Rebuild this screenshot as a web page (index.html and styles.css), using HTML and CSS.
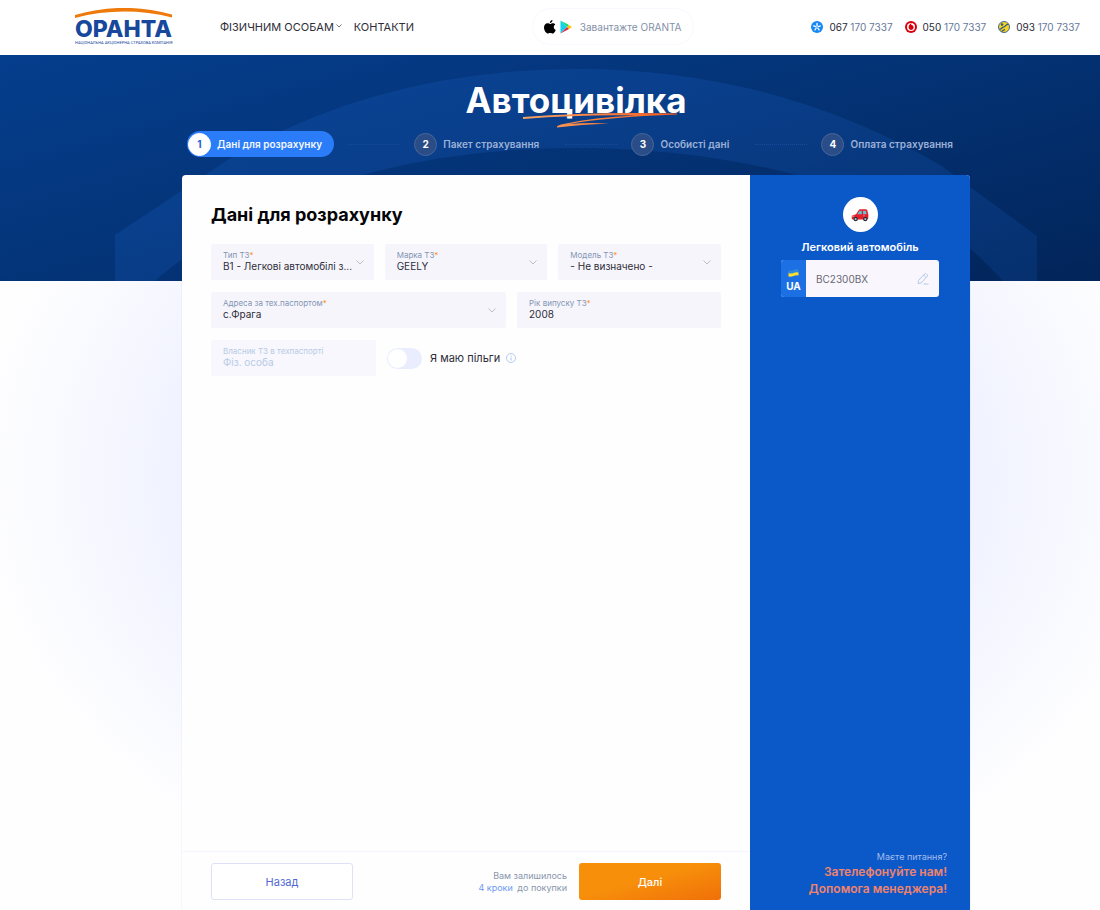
FILE: index.html
```html
<!DOCTYPE html>
<html lang="uk">
<head>
    <meta charset="UTF-8">
    <meta name="viewport" content="width=device-width, initial-scale=1">
    <title>Автоцивілка</title>
    <link rel="stylesheet" href="styles.css">
</head>
<body>
    <header class="header">
        <a class="logo" href="#">
            <svg class="logo-arc" viewBox="0 0 98 11" aria-hidden="true"><path d="M0 7Q48-7 97 6.500V9.500Q48-2.500 0 10Z" fill="#ee7a0b"/></svg>
            <span class="logo-name">ОРАНТА</span>
            <span class="logo-sub">НАЦІОНАЛЬНА АКЦІОНЕРНА СТРАХОВА КОМПАНІЯ</span>
        </a>
        <nav class="nav">
            <a href="#">ФІЗИЧНИМ ОСОБАМ
                <svg width="6" height="4" viewBox="0 0 6 4"><path d="M.5.500 3 3 5.500.500" fill="none" stroke="#555" stroke-width=".8"/></svg>
            </a>
            <a href="#">КОНТАКТИ</a>
        </nav>
        <a class="app-link" href="#">
            <svg width="12" height="14" viewBox="0 0 24 28"><path d="M17 0c.3 3-2.300 6.200-5.300 6C11.300 3.200 14 .400 17 0ZM12.300 7.800c1.200 0 2.700-1.500 5.200-1.500 2 0 4 1 5.200 2.800-4.500 2.700-3.800 8.900.800 10.900-1.200 3.300-3.500 7-6 7-2 0-2.600-1.200-5-1.200S9.200 27 7.400 27C4 27 0 20.500 0 15.200c0-5.500 3.300-8.700 6.800-8.700 2.500 0 4.300 1.300 5.500 1.300Z" fill="#000"/></svg>
            <svg width="12" height="14" viewBox="0 0 24 28"><path d="M1 1v26L14 14Z" fill="#12d0ef"/><path d="M1 1 18 10 14 14Z" fill="#10dc70"/><path d="M18 10l6 4-6 4-4-4Z" fill="#fdc500"/><path d="M1 27 18 18 14 14Z" fill="#e32a45"/></svg>
            <span>Завантажте ORANTA</span>
        </a>
        <div class="phones">
            <a href="tel:0671707337">
                <svg width="12" height="12" viewBox="0 0 24 24"><circle cx="12" cy="12" r="12" fill="#1589f4"/><path d="M12 9.500V5M14.400 11.200l4.300-1.400M13.500 14l2.600 3.700M10.500 14l-2.600 3.700M9.600 11.200 5.300 9.800" stroke="#fff" stroke-width="2.600" stroke-linecap="round"/></svg>
                <span><b>067</b> 170 7337</span>
            </a>
            <a href="tel:0501707337">
                <svg width="12" height="12" viewBox="0 0 24 24"><circle cx="12" cy="12" r="12" fill="#d9000d"/><circle cx="12" cy="12" r="8" fill="#fff"/><path d="M14.500 4c-2 .5-2.500 2-2.300 3.500 3 .7 5 2.500 5 5.200a5 5 0 0 1-10 .2C7 8.500 10.500 4.500 14.500 4Z" fill="#d9000d"/></svg>
                <span><b>050</b> 170 7337</span>
            </a>
            <a href="tel:0931707337">
                <svg width="12" height="12" viewBox="0 0 24 24"><circle cx="12" cy="12" r="11" fill="#f9d31c" stroke="#42699b" stroke-width="2"/><path d="M3 16c5 1 4-4 8-4s4-6 10-5M7 21c4-1 3-4 7-4" fill="none" stroke="#28598f" stroke-width="2.500"/><circle cx="8" cy="7" r="2.500" fill="#28598f"/></svg>
                <span><b>093</b> 170 7337</span>
            </a>
        </div>
    </header>

    <main class="main">
        <svg class="backdrop" viewBox="0 0 1100 226" preserveAspectRatio="none" aria-hidden="true">
            <defs>
                <linearGradient id="arch" x1="0" y1="0" x2="1" y2="1">
                    <stop offset="0" stop-color="#1557b5" stop-opacity=".35"/>
                    <stop offset="1" stop-color="#1557b5" stop-opacity=".2"/>
                </linearGradient>
            </defs>
            <path d="M115 226V180Q183 135 238 98Q390 14 576 14Q775 14 940 110L1037 181V226H1003Q970 190 940 170Q770 93 576 93Q390 93 260 160Q195 190 155 226Z" fill="url(#arch)"/>
        </svg>

        <div class="content">
            <h1 class="title">Автоцивілка
                <svg class="underline" width="154" height="16" viewBox="0 0 154 16" aria-hidden="true">
                    <defs>
                        <linearGradient id="stroke" x1="0" x2="1"><stop offset="0" stop-color="#f8a463"/><stop offset="1" stop-color="#f75b1c"/></linearGradient>
                    </defs>
                    <path d="M0 5Q74-.500 154 1.500V2.500Q84 5 46 12Q64 10.500 86 11.500Q58 12.500 34 15.500Q33 14 38 12.500Q72 5 112 3.500Q60 2.500 0 7Z" fill="url(#stroke)"/>
                </svg>
            </h1>

            <ol class="steps">
                <li class="step active"><span class="num">1</span>Дані для розрахунку</li>
                <li class="line"></li>
                <li class="step"><span class="num">2</span>Пакет страхування</li>
                <li class="line"></li>
                <li class="step"><span class="num">3</span>Особисті дані</li>
                <li class="line"></li>
                <li class="step"><span class="num">4</span>Оплата страхування</li>
            </ol>

            <div class="card">
                <form class="form">
                    <div class="form-body">
                        <h2>Дані для розрахунку</h2>
                        <div class="row thirds">
                            <div class="field">
                                <label for="type">Тип ТЗ<i>*</i></label>
                                <select id="type"><option>В1 - Легкові автомобілі з...</option></select>
                            </div>
                            <div class="field">
                                <label for="brand">Марка ТЗ<i>*</i></label>
                                <select id="brand"><option>GEELY</option></select>
                            </div>
                            <div class="field">
                                <label for="model">Модель ТЗ<i>*</i></label>
                                <select id="model"><option>- Не визначено -</option></select>
                            </div>
                        </div>
                        <div class="row address">
                            <div class="field">
                                <label for="address">Адреса за тех.паспортом<i>*</i></label>
                                <select id="address"><option>с.Фрага</option></select>
                            </div>
                            <div class="field">
                                <label for="year">Рік випуску ТЗ<i>*</i></label>
                                <input id="year" type="text" value="2008">
                            </div>
                        </div>
                        <div class="row owner">
                            <div class="field disabled">
                                <label for="owner">Власник ТЗ в техпаспорті</label>
                                <input id="owner" type="text" value="Фіз. особа" disabled>
                            </div>
                            <div class="benefits">
                                <input class="toggle" id="benefits" type="checkbox">
                                <label for="benefits">Я маю пільги</label>
                                <svg width="10" height="10" viewBox="0 0 20 20"><circle cx="10" cy="10" r="9" fill="none" stroke="#9fbde6" stroke-width="1.500"/><path d="M10 9v6M10 5v2" stroke="#9fbde6" stroke-width="1.800"/></svg>
                            </div>
                        </div>
                    </div>
                    <div class="form-footer">
                        <button class="btn back" type="button">Назад</button>
                        <p class="left-steps">Вам залишилось<br><a href="#">4 кроки</a> до покупки</p>
                        <button class="btn next" type="button">Далі</button>
                    </div>
                </form>

                <aside class="side">
                    <div class="car">
                        <svg width="18" height="14" viewBox="0 0 40 32" aria-hidden="true">
                            <path d="M1 20q0-3 4-4l6-2 6-9q1-2 4-2h12q3 0 4 3l2 8v9q0 3-3 3H4q-3 0-3-3Z" fill="#e51d2b"/>
                            <path d="M14 14l5-7q1-1 3-1h2v8ZM27 6h5q2 0 2 2l1 6h-8Z" fill="#62c5d6"/>
                            <path d="M2 20l6-2M27 18h4" stroke="#ffb1a6" stroke-width="1.500"/>
                            <circle cx="10" cy="25" r="5" fill="#26323a"/><circle cx="10" cy="25" r="2.300" fill="#b8c5ca"/>
                            <circle cx="32" cy="25" r="5" fill="#26323a"/><circle cx="32" cy="25" r="2.300" fill="#b8c5ca"/>
                        </svg>
                    </div>
                    <h3>Легковий автомобіль</h3>
                    <div class="plate">
                        <div class="country">
                            <svg width="11" height="8" viewBox="0 0 22 16" aria-hidden="true"><path d="M1 2q5 2 10 0t10-1v7q-5-1-10 1T1 9Z" fill="#3189dc"/><path d="M1 8q5 2 10 0t10-1v6q-5-1-10 1T1 15Z" fill="#fde02e"/></svg>
                            UA
                        </div>
                        <input type="text" value="BC2300BX" aria-label="Номерний знак">
                        <button type="button" aria-label="Редагувати">
                            <svg width="12" height="12" viewBox="0 0 24 24" fill="none" stroke="#a9c4e2" stroke-width="1.800" stroke-linejoin="round"><path d="M2 21l1-6L15 2q2-2 4 0l1 1q2 2 0 4L8 20ZM13 4l5 5M13 22h10"/></svg>
                        </button>
                    </div>
                    <div class="help">
                        <p>Маєте питання?</p>
                        <a href="#">Зателефонуйте нам!</a>
                        <a href="#">Допомога менеджера!</a>
                    </div>
                </aside>
            </div>
        </div>
    </main>
</body>
</html>
```

FILE: styles.css
```css
* {
    box-sizing: border-box;
}

body {
    margin: 0;
    min-height: 100vh;
    display: flex;
    flex-direction: column;
    font-family: Inter, "Open Sans", sans-serif;
    font-size: 11px;
    color: #2d2d38;
    background: #fefeff;
}

h1, h2, h3, p, ol {
    margin: 0;
    padding: 0;
}

a {
    color: inherit;
    text-decoration: none;
}

svg {
    flex: none;
}

button, input, select {
    font-family: inherit;
}

/* header */
.header {
    height: 55px;
    padding: 0 20px 2px 75px;
    display: flex;
    align-items: center;
    background: #fff;
}

.logo {
    width: 98px;
    display: flex;
    flex-direction: column;
    color: #17489c;
}

.logo-arc {
    width: 98px;
    height: 11px;
}

.logo-name {
    font-size: 23px;
    line-height: 20px;
    font-weight: 800;
}

.logo-sub {
    margin-top: 2px;
    font-family: Roboto, sans-serif;
    font-size: 4px;
    line-height: 4px;
    white-space: nowrap;
}

.nav {
    margin-left: 47px;
    display: flex;
    gap: 12px;
}

.nav a {
    display: flex;
    gap: 2px;
    white-space: nowrap;
}

.nav svg {
    margin-top: 4px;
}

.app-link {
    height: 37px;
    margin-left: auto;
    padding: 0 11px;
    display: flex;
    align-items: center;
    gap: 4px;
    border: 1px solid #f8f8fe;
    border-radius: 20px;
    font-size: 10px;
    color: #8390a9;
    white-space: nowrap;
}

.app-link span {
    margin-left: 4px;
}

.phones {
    margin-left: auto;
    display: flex;
    gap: 12px;
    font-size: 10px;
    color: #66799a;
    white-space: nowrap;
}

.phones a {
    display: flex;
    align-items: center;
    gap: 6px;
}

.phones b {
    font-weight: 400;
    color: #292936;
}

/* main area */
.main {
    position: relative;
    flex: 1;
    display: flex;
    padding-left: 52px;
    background:
        linear-gradient(165deg, #053e8d 0%, #04357a 40%, #02255a 100%) 0 0 / 100% 226px no-repeat,
        radial-gradient(ellipse 600px 450px at 576px 420px, #e9ecff 0%, #f0f2ff 66%, #f8f9ff 84%, #fefeff 100%);
}

.backdrop {
    position: absolute;
    top: 0;
    left: 0;
    width: 100%;
    height: 226px;
}

.content {
    position: relative;
    width: 100%;
    max-width: 788px;
    margin: 0 auto;
    display: flex;
    flex-direction: column;
}

.title {
    position: relative;
    align-self: center;
    margin-top: 24px;
    font-size: 35px;
    line-height: 42px;
    font-weight: 700;
    color: #fff;
}

.underline {
    position: absolute;
    right: 10px;
    bottom: -7px;
}

.steps {
    margin: 10px 5px 18px;
    display: flex;
    align-items: center;
    justify-content: space-between;
    list-style: none;
}

.step {
    height: 26px;
    padding: 0 12px 0 1px;
    display: flex;
    align-items: center;
    gap: 6px;
    border-radius: 13px;
    font-size: 10px;
    font-weight: 600;
    color: #9db1d8;
    white-space: nowrap;
}

.num {
    width: 23px;
    height: 23px;
    display: grid;
    place-items: center;
    border: 1px solid #496798;
    border-radius: 50%;
    background: #2b4d87;
    color: #fff;
    font-weight: 700;
}

.step.active {
    background: #2b7cf8;
    color: #f4f8ff;
}

.step.active .num {
    background: #fff;
    border-color: #fff;
    color: #2462cf;
}

.line {
    width: 52px;
    border-top: 1px dotted #174b99;
}

/* card */
.card {
    flex: 1;
    display: grid;
    grid-template-columns: 1fr 220px;
    border-radius: 4px 4px 0 0;
    overflow: hidden;
    background: #fefeff;
    box-shadow: 0 0 1px rgba(40, 50, 200, .35);
}

.form {
    display: flex;
    flex-direction: column;
}

.form-body {
    flex: 1;
    padding: 28px 29px;
    display: flex;
    flex-direction: column;
    gap: 12px;
}

.form h2 {
    margin-bottom: 5px;
    font-size: 18px;
    line-height: 24px;
    font-weight: 700;
    color: #050508;
}

.row {
    display: grid;
    gap: 11px;
}

.thirds {
    grid-template-columns: repeat(3, 1fr);
}

.address {
    grid-template-columns: 295fr 204fr;
}

.owner {
    grid-template-columns: 165px 1fr;
}

.field {
    height: 36px;
    padding: 7px 10px 5px 12px;
    border-radius: 2px;
    background: #f7f5fc;
}

.field label {
    display: block;
    font-size: 8px;
    line-height: 9px;
    color: #8295b3;
}

.field i {
    font-style: normal;
    color: #ff8f1f;
}

.field select,
.field input {
    display: block;
    width: 100%;
    height: 13px;
    padding: 0;
    border: 0;
    outline: 0;
    appearance: none;
    background: none;
    font-size: 10px;
    line-height: 13px;
    color: #2d2d38;
}

.field select {
    background: url("data:image/svg+xml,%3Csvg xmlns='http://www.w3.org/2000/svg' width='8' height='5'%3E%3Cpath d='M.5.500 4 4 7.500.500' fill='none' stroke='%23b9bfcc'/%3E%3C/svg%3E") right 0 top 0 no-repeat;
}

.field.disabled {
    background: #f7f7fd;
}

.field.disabled label,
.field.disabled input {
    color: #b9cbe6;
}

.benefits {
    display: flex;
    align-items: center;
    gap: 6px;
}

.toggle {
    appearance: none;
    width: 35px;
    height: 21px;
    margin: 0 2px 0 0;
    border-radius: 11px;
    background: #e9edfd;
}

.toggle::before {
    content: "";
    display: block;
    width: 19px;
    height: 19px;
    margin: 1px;
    border-radius: 50%;
    background: #fff;
}

.form-footer {
    padding: 11px 29px 10px;
    display: flex;
    align-items: center;
    border-top: 1px solid #f4f5fd;
}

.btn {
    width: 142px;
    height: 37px;
    border: 1px solid #dfe1f8;
    border-radius: 3px;
    font-size: 11px;
    cursor: pointer;
}

.back {
    background: #fff;
    color: #5267d2;
}

.next {
    border: 0;
    background: linear-gradient(165deg, #f78f0b 45%, #f07008 100%);
    color: #fff;
    font-weight: 500;
}

.left-steps {
    margin: 0 12px 0 auto;
    font-size: 9px;
    line-height: 12px;
    text-align: right;
    color: #8996ac;
}

.left-steps a {
    margin-right: 2px;
    color: #6f9af4;
}

/* right panel */
.side {
    padding: 22px 23px 13px 23px;
    display: flex;
    flex-direction: column;
    align-items: center;
    background: #0b58c9;
}

.car {
    width: 35px;
    height: 35px;
    display: grid;
    place-items: center;
    border-radius: 50%;
    background: #fff;
}

.side h3 {
    margin: 8px 0 5px;
    font-size: 11px;
    line-height: 15px;
    font-weight: 600;
    color: #fff;
}

.plate {
    width: 158px;
    height: 37px;
    display: flex;
    border-radius: 3px;
    overflow: hidden;
    background: #f9f7fd;
}

.country {
    width: 25px;
    padding-top: 4px;
    display: flex;
    flex-direction: column;
    align-items: center;
    justify-content: center;
    gap: 3px;
    background: #1d6fe4;
    color: #fff;
    font-size: 10px;
    line-height: 12px;
    font-weight: 700;
}

.plate input {
    flex: 1;
    min-width: 0;
    padding: 0 10px;
    border: 0;
    outline: 0;
    background: none;
    font-size: 10px;
    color: #686875;
}

.plate button {
    padding: 0 10px 0 0;
    border: 0;
    display: flex;
    align-items: center;
    background: none;
    cursor: pointer;
}

.help {
    margin-top: auto;
    align-self: stretch;
    display: flex;
    flex-direction: column;
    text-align: right;
    font-size: 12px;
    line-height: 17px;
    font-weight: 600;
    color: #ef836b;
}

.help p {
    font-size: 9px;
    line-height: 12px;
    font-weight: 400;
    color: #a5bdec;
}
```
